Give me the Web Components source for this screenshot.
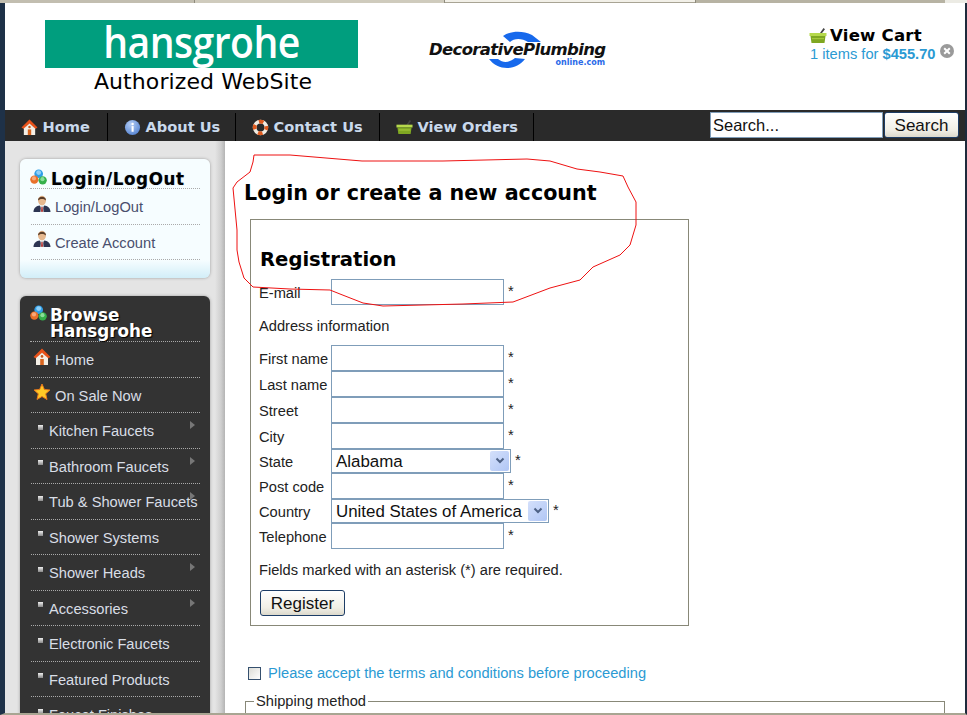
<!DOCTYPE html>
<html>
<head>
<meta charset="utf-8">
<title>Login or create a new account</title>
<style>
  html, body { margin: 0; padding: 0; height: 715px; overflow: hidden; background: #fff; }
  body { font: 14.67px "Liberation Sans", Arial, sans-serif; color: #111; }
</style>
</head>
<body>
<shop-page>
  <shop-header slot="header"></shop-header>
  <shop-nav slot="nav">
    <nav-link label="Home" icon="house" width="103"></nav-link>
    <nav-link label="About Us" icon="info" width="128"></nav-link>
    <nav-link label="Contact Us" icon="buoy" width="144"></nav-link>
    <nav-link label="View Orders" icon="basket" width="154"></nav-link>
  </shop-nav>
  <div slot="side">
    <side-panel title-text="Login/LogOut">
      <side-item label="Login/LogOut" icon="person"></side-item>
      <side-item label="Create Account" icon="person"></side-item>
    </side-panel>
    <side-panel dark title-text="Browse Hansgrohe">
      <side-item dark label="Home" icon="house"></side-item>
      <side-item dark label="On Sale Now" icon="star"></side-item>
      <side-item dark bullet arrow label="Kitchen Faucets"></side-item>
      <side-item dark bullet arrow label="Bathroom Faucets"></side-item>
      <side-item dark bullet arrow label="Tub &amp; Shower Faucets"></side-item>
      <side-item dark bullet label="Shower Systems"></side-item>
      <side-item dark bullet arrow label="Shower Heads"></side-item>
      <side-item dark bullet arrow label="Accessories"></side-item>
      <side-item dark bullet label="Electronic Faucets"></side-item>
      <side-item dark bullet label="Featured Products"></side-item>
      <side-item dark bullet label="Faucet Finishes"></side-item>
    </side-panel>
  </div>
  <checkout-main slot="main"></checkout-main>
</shop-page>

<script>
// shared little icons, all 18x18
const ICONS = {
  house: `<svg viewBox="0 0 18 18" width="18" height="18"><path d="M9 .5 L17.5 9 L15 10.5 L9 5 L3 10.5 L.5 9 Z" fill="#e8521a"/><path d="M3 10 L9 4.8 L15 10 V17 H3 Z" fill="#f4efe6"/><rect x="7.2" y="11" width="3.6" height="6" fill="#d8641e"/><circle cx="9" cy="8.4" r="1.3" fill="#c9571c"/></svg>`,
  info: `<svg viewBox="0 0 18 18" width="18" height="18"><defs><radialGradient id="i" cx=".4" cy=".3" r=".8"><stop offset="0" stop-color="#b4cdf4"/><stop offset="1" stop-color="#4f7fd0"/></radialGradient></defs><circle cx="9" cy="9" r="8" fill="url(#i)"/><rect x="8" y="7.5" width="2.2" height="6" fill="#fff"/><circle cx="9.1" cy="5.2" r="1.3" fill="#fff"/></svg>`,
  buoy: `<svg viewBox="0 0 18 18" width="18" height="18"><circle cx="9" cy="9" r="6.2" fill="none" stroke="#f0ebe2" stroke-width="4"/><circle cx="9" cy="9" r="6.2" fill="none" stroke="#df5a1e" stroke-width="4" stroke-dasharray="4.9 4.84" stroke-dashoffset="2.45"/></svg>`,
  basket: `<svg viewBox="0 0 18 18" width="18" height="18"><path d="M11 6 L14.5 1 L16 2.2 L12.6 6.5 Z" fill="#444"/><path d="M.5 6 H17.5 V9 H.5 Z" fill="#b6d94c"/><path d="M1.5 9 H16.5 L15.5 16 H2.5 Z" fill="#7fa722"/><rect x="3" y="11" width="12" height="1.2" fill="#a4c83c"/></svg>`,
  person: `<svg viewBox="0 0 18 18" width="18" height="18"><path d="M.5 17 C.5 12.5 4 11 6.5 10.5 L9 12 L11.5 10.5 C14 11 17.5 12.5 17.5 17 Z" fill="#2c3552"/><path d="M7 10.5 L9 12 L11 10.5 L10.2 13 L10.6 17 H7.4 L7.8 13 Z" fill="#f2ece4"/><path d="M8.4 12 H9.6 L10 16.8 H8 Z" fill="#b03030"/><ellipse cx="9" cy="5.6" rx="4" ry="4.8" fill="#e6b88e"/><path d="M5 5.5 C4.8 .5 13.2 .5 13 5.5 C11.5 3.4 6.5 3.4 5 5.5 Z" fill="#5a3d28"/></svg>`,
  star: `<svg viewBox="0 0 18 18" width="18" height="18"><path d="M9 1 L11.4 6.5 L17 7 L12.7 10.8 L14 16.5 L9 13.5 L4 16.5 L5.3 10.8 L1 7 L6.6 6.5 Z" fill="#ffc926" stroke="#e8781a" stroke-width="1"/></svg>`,
  cubes: `<svg viewBox="0 0 18 18" width="18" height="18"><circle cx="9.2" cy="5" r="4.6" fill="#2f9fe8"/><circle cx="9.2" cy="3.8" r="2.6" fill="#8fd0f8"/><circle cx="4.6" cy="11.2" r="4.4" fill="#e8702a"/><circle cx="4.2" cy="10" r="2.2" fill="#f8a878"/><circle cx="13.4" cy="12" r="4.4" fill="#35b04a"/><circle cx="13.2" cy="10.8" r="2.2" fill="#8ade98"/></svg>`
}

class ShopPage extends HTMLElement {
  constructor () {
    super()
    this.attachShadow({ mode: 'open' }).innerHTML = `
    <style>
      :host { display: flex; flex-direction: column; height: 715px; overflow: hidden; position: relative; }
      .tabs { display: flex; height: 3px; flex: none; background: #d6d2c6; }
      .tabs i { display: block; height: 3px; box-sizing: border-box; }
      .t1 { width: 195px; background: #c2beb0; border-right: 1px solid #8e8a7c; }
      .t2 { width: 250px; background: #cfcbbd; border-right: 1px solid #8e8a7c; }
      .t3 { width: 250px; background: #f2f0e8; border-bottom: 1px solid #a8a494; }
      .t4 { width: 250px; background: #b7b3a3; border-left: 1px solid #8e8a7c; }
      .t5 { flex: 1; background: #ecebe4; }
      .frame { flex: 1; min-height: 0; display: flex; flex-direction: column;
        border-left: 5px solid #1e3148; border-right: 2px solid #1e2b3c; border-bottom: 2px solid #a8a592; background: #fff; }
      .body { flex: 1; min-height: 0; display: flex; overflow: hidden; }
      .side { flex: none; width: 220px; box-sizing: border-box; padding: 18px 15px 0 15px;
        background: linear-gradient(to right, #e4e4e4 0, #e4e4e4 210px, #cfcfcf 216px, #b4b4b4 220px); }
      .main { flex: 1; min-width: 0; }
    </style>
    <div class="tabs"><i class="t1"></i><i class="t2"></i><i class="t3"></i><i class="t4"></i><i class="t5"></i></div>
    <div class="frame">
      <slot name="header"></slot>
      <slot name="nav"></slot>
      <div class="body">
        <div class="side"><slot name="side"></slot></div>
        <div class="main"><slot name="main"></slot></div>
      </div>
    </div>
    `
  }
}

class ShopHeader extends HTMLElement {
  constructor () {
    super()
    this.attachShadow({ mode: 'open' }).innerHTML = `
    <style>
      :host { display: flex; height: 107px; flex: none; box-sizing: border-box; padding: 17px 0 0 40px; background: #fff; }
      .brand { width: 313px; flex: none; text-align: center; }
      .logo { height: 48px; background: #009e7e; color: #fff; text-align: center; }
      .logo span { display: inline-block; transform: scaleX(.89); font: 600 44px/44px "Open Sans", sans-serif; letter-spacing: -.6px; margin-top: -1px; }
      .auth { font: 22px/26px "DejaVu Sans", Verdana, sans-serif; color: #000; margin-top: 1px; padding-left: 3px; letter-spacing: .1px; }
      .dp { width: 178px; flex: none; margin: 11px 0 0 70px; position: relative; height: 40px; }
      .dp svg { position: absolute; left: 58px; top: 0; }
      .dp b { position: absolute; left: 1px; top: 11px; white-space: nowrap; color: #111;
        font: italic 700 16.5px/16px "DejaVu Sans", sans-serif; letter-spacing: -.67px; }
      .dp span { position: absolute; right: 1px; top: 27px; color: #2a6ae8;
        font: 700 8px/10px "DejaVu Sans", sans-serif; }
      .cart { margin-left: auto; width: 155px; flex: none; padding-top: 6px; }
      .cart .top { display: flex; align-items: center; gap: 3px; font: 700 16.6px/20px "DejaVu Sans", sans-serif; color: #000; margin-left: -1px; letter-spacing: .2px; }
      .cart .sum { color: #2b9ad3; font-size: 14.67px; line-height: 16px; display: flex; align-items: center; gap: 5px; margin-top: 0; }
      .x { width: 14px; height: 14px; flex: none; margin-top: -6px; }
    </style>
    <div class="brand">
      <div class="logo"><span>hansgrohe</span></div>
      <div class="auth">Authorized WebSite</div>
    </div>
    <div class="dp">
      <svg viewBox="0 0 56 40" width="56" height="40"><path d="M17 5 C24 0 36 -1 46 4 L55 11 L42 11 C36 7 28 7 24 11 Z" fill="#1769ec"/><path d="M3 28 L12 28 C18 33 24 31 29 27 L39 28 C30 40 12 40 3 28 Z" fill="#1769ec"/></svg>
      <b>DecorativePlumbing</b>
      <span>online.com</span>
    </div>
    <div class="cart">
      <div class="top">${ICONS.basket}<span>View Cart</span></div>
      <div class="sum"><span>1 items for <b>$455.70</b></span>
        <svg class="x" viewBox="0 0 14 14"><circle cx="7" cy="7" r="7" fill="#9a9a9a"/><path d="M4.2 4.2 L9.8 9.8 M9.8 4.2 L4.2 9.8" stroke="#fff" stroke-width="2"/></svg>
      </div>
    </div>
    `
  }
}

class ShopNav extends HTMLElement {
  constructor () {
    super()
    this.attachShadow({ mode: 'open' }).innerHTML = `
    <style>
      :host { display: flex; align-items: stretch; height: 31px; flex: none; background: #2a2a2a; padding-left: 0; }
      .links { display: flex; flex: 1; padding-top: 3px; }
      form { display: flex; align-items: flex-start; margin: 2px 6px 0 0; }
      input { width: 173px; height: 26px; box-sizing: border-box; border: 1px solid #7f9db9; padding: 0 2px; margin: 0;
        font: 16.5px "Liberation Sans", sans-serif; color: #111; background: #fff; outline: none; }
      input::placeholder { color: #111; opacity: 1; }
      button { width: 75px; height: 26px; box-sizing: border-box; margin-left: 1px; padding: 1px 0 0; border: 1px solid #1d3d66; border-radius: 3px;
        background: linear-gradient(#fff, #f1efe6 70%, #dcd9cc); font: 17px "Liberation Sans", sans-serif; color: #111; }
    </style>
    <div class="links"><slot></slot></div>
    <form onsubmit="return false"><input placeholder="Search..."><button>Search</button></form>
    `
  }
}

class NavLink extends HTMLElement {
  connectedCallback () {
    const root = this.attachShadow({ mode: 'open' })
    root.innerHTML = `
    <style>
      :host { display: flex; align-items: center; box-sizing: border-box; height: 28px; gap: 5px;
        border-right: 1px solid #000; padding: 0 0 0 15.5px; width: ${this.getAttribute('width')}px; }
      span { font: 700 14.6px/20px "DejaVu Sans", Verdana, sans-serif; color: #c9d9ec; white-space: nowrap; }
      svg { flex: none; width: 17px; height: 17px; }
    </style>
    ${ICONS[this.getAttribute('icon')]}<span>${this.getAttribute('label')}</span>
    `
  }
}

class SidePanel extends HTMLElement {
  connectedCallback () {
    const dark = this.hasAttribute('dark')
    const root = this.attachShadow({ mode: 'open' })
    root.innerHTML = `
    <style>
      :host { display: block; width: 190px; box-sizing: border-box; border-radius: 6px; padding: 7px 10px 0 10px;
        box-shadow: 0 0 3px #999; margin-bottom: 18px;
        background: ${dark ? '#333' : 'linear-gradient(#f6fdff 0, #f6fdff 101px, #d2eef8 119px)'}; height: ${dark ? '440px' : '119px'}; }
      h3 { margin: 0; display: flex; gap: ${dark ? '3px' : '4px'}; border-bottom: 1px dotted #aaa;
        font: 700 16.8px/16px "DejaVu Sans", Verdana, sans-serif; color: ${dark ? '#fff' : '#000'};
        letter-spacing: ${dark ? '0' : '.6px'};
        padding: ${dark ? '4px 0 2px' : '5px 0 1px'}; text-shadow: ${dark ? '1px 1px 1px #000' : '0 0 1px #8ac'}; }
      h3 svg { flex: none; margin-top: -2px; width: 17px; height: 17px; }
    </style>
    <h3>${ICONS.cubes}<span>${this.getAttribute('title-text')}</span></h3>
    <slot></slot>
    `
  }
}

class SideItem extends HTMLElement {
  connectedCallback () {
    const dark = this.hasAttribute('dark')
    const bullet = this.hasAttribute('bullet')
    const icon = this.getAttribute('icon')
    const root = this.attachShadow({ mode: 'open' })
    root.innerHTML = `
    <style>
      :host { display: flex; align-items: center; position: relative; box-sizing: border-box; height: 35.5px; margin-left: 1px;
        border-bottom: 1px dotted #aaa; white-space: nowrap;
        font: 14.67px/16px "Liberation Sans", Arial, sans-serif; color: ${dark ? '#d9dee6' : '#4a4f6e'}; padding: 2px 0 0 ${bullet ? '7px' : '2px'}; }
      svg.ic { width: 18px; height: 18px; flex: none; margin: -7px 4px 0 0; }
      .b { width: 5px; height: 5px; flex: none; margin: -8px 6px 0 0; background: linear-gradient(#eee, #888); }
      .a { position: absolute; right: 5px; top: 8px; width: 0; height: 0; border: 4px solid transparent; border-left: 5px solid #777; border-right: 0; }
    </style>
    ${icon ? ICONS[icon].replace('<svg', '<svg class="ic"') : ''}${bullet ? '<i class="b"></i>' : ''}<span>${this.getAttribute('label')}</span>${this.hasAttribute('arrow') ? '<i class="a"></i>' : ''}
    `
  }
}

class FormRow extends HTMLElement {
  connectedCallback () {
    const label = this.getAttribute('label')
    const select = this.getAttribute('select')
    const root = this.attachShadow({ mode: 'open' })
    root.innerHTML = `
    <style>
      :host { display: flex; align-items: center; height: ${select ? 24 : 26}px; font-size: 14.67px; color: #222; }
      label { width: 72px; flex: none; padding-top: 1px; white-space: nowrap; }
      input { width: 173px; height: 26px; box-sizing: border-box; margin: 0; border: 1px solid #7f9db9; background: #fff; outline: none; }
      .sel { display: flex; align-items: center; height: 24px; box-sizing: border-box; border: 1px solid #7f9db9; padding: 1px 1px 1px 4px;
        font-size: 16.9px; color: #111; white-space: nowrap; }
      .sel span { padding-top: 1px; }
      .sel i { display: flex; align-items: center; justify-content: center; width: 19px; height: 20px; margin-left: 3px; border-radius: 2px;
        background: linear-gradient(135deg, #d4e0fb, #b0c6f5); }
      .star { margin: -2px 0 0 4px; }
    </style>
    <label>${label}</label>
    ${select ? `<div class="sel" style="width:${this.getAttribute('w')}px"><span style="flex:1">${select}</span><i><svg width="10" height="8" viewBox="0 0 10 8"><path d="M1.5 1.5 L5 5 L8.5 1.5" fill="none" stroke="#4d6185" stroke-width="2"/></svg></i></div>` : '<input>'}
    <span class="star">*</span>
    `
  }
}

class CheckoutMain extends HTMLElement {
  constructor () {
    super()
    this.attachShadow({ mode: 'open' }).innerHTML = `
    <style>
      :host { display: block; position: relative; height: 100%; box-sizing: border-box; padding: 39px 0 0 20px; font-size: 14.67px; color: #222; }
      h1 { margin: 0 0 0 -1px; font: 700 20.7px/26px "DejaVu Sans", Verdana, sans-serif; color: #000; }
      .box { width: 439px; height: 407px; box-sizing: border-box; border: 1px solid #888878; margin: 13px 0 0 5px; padding: 27px 0 0 8px; }
      h2 { margin: 0 0 6px 1px; font: 700 19.6px/26px "DejaVu Sans", Verdana, sans-serif; color: #000; }
      p { margin: 0; line-height: 16px; }
      .addr { margin: 13px 0 11px; }
      .req { margin: 13px 0 12px; }
      button { width: 85px; height: 26px; padding: 1px 0 0; box-sizing: border-box; margin-left: 1px; border: 1px solid #1d3d66; border-radius: 3px;
        background: linear-gradient(#fff, #f1efe6 70%, #dcd9cc); font: 17px "Liberation Sans", sans-serif; color: #111; }
      .terms { display: flex; align-items: center; margin: 38px 0 0 3px; color: #2b9ad3; line-height: 18px; height: 18px; }
      .terms i { width: 13px; height: 13px; box-sizing: border-box; border: 1px solid #35506e; background: linear-gradient(135deg, #dcdcd6, #fff); margin-right: 7px; }
      fieldset { margin: 11px 0 0 0; padding: 0; width: 700px; height: 60px; box-sizing: border-box; border: 1px solid #888878; border-bottom: 0; }
      legend { margin-left: 8px; padding: 0 2px 0 2px; line-height: 16px; }
      svg.scribble { position: absolute; left: 0; top: 0; pointer-events: none; }
    </style>
    <h1>Login or create a new account</h1>
    <div class="box">
      <h2>Registration</h2>
      <form-row label="E-mail"></form-row>
      <p class="addr">Address information</p>
      <form-row label="First name"></form-row>
      <form-row label="Last name"></form-row>
      <form-row label="Street"></form-row>
      <form-row label="City"></form-row>
      <form-row label="State" select="Alabama" w="180"></form-row>
      <form-row label="Post code"></form-row>
      <form-row label="Country" select="United States of America" w="218"></form-row>
      <form-row label="Telephone"></form-row>
      <p class="req">Fields marked with an asterisk (*) are required.</p>
      <button>Register</button>
    </div>
    <div class="terms"><i></i><span>Please accept the terms and conditions before proceeding</span></div>
    <fieldset><legend>Shipping method</legend></fieldset>
    <svg class="scribble" width="500" height="200" viewBox="225 141 500 200">
      <path fill="none" stroke="#ee1111" stroke-width="1" d="M254 155 L290 155 L326 158 L362 161 L420 161 L443 161 L527 159 L550 161 L577 169 L600 172 L623 176 L628 187 L636 202 L636 225 L630 245 L620 255 L593 267 L580 280 L550 288 L513 302 L463 304 L383 306 L363 303 L340 294 L330 290 L290 289 L253 287 L244 278 L239 262 L237 250 L237 230 L233 188 L237 182 L250 172 L253 162 Z"/>
    </svg>
    `
  }
}

customElements.define('shop-page', ShopPage)
customElements.define('shop-header', ShopHeader)
customElements.define('shop-nav', ShopNav)
customElements.define('nav-link', NavLink)
customElements.define('side-panel', SidePanel)
customElements.define('side-item', SideItem)
customElements.define('form-row', FormRow)
customElements.define('checkout-main', CheckoutMain)
</script>
</body>
</html>
